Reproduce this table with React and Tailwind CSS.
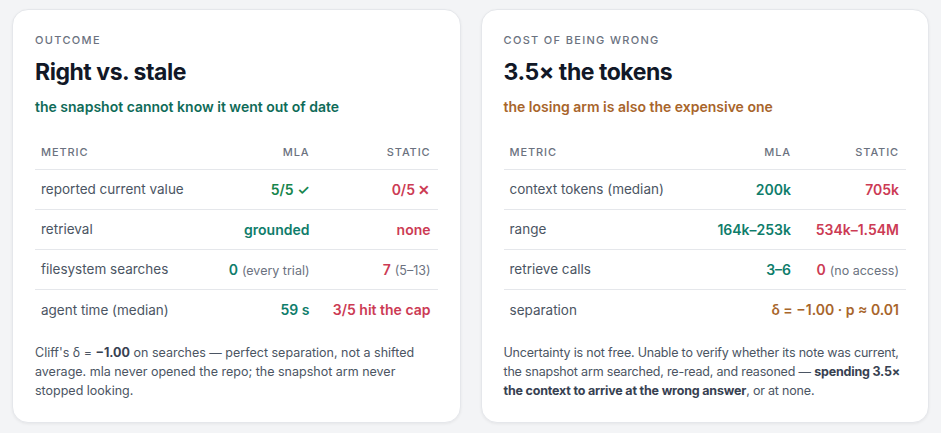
const teal = "text-[#0f7d6b]";
const green = "text-[#17854c]";
const red = "text-[#cc3b54]";
const amber = "text-[#a8652b]";

function Note({ children }) {
  return <span className="ml-1 text-[12.5px] font-normal text-[#6b7280]">{children}</span>;
}

function Card({ label, title, subtitle, subColor, cols, rows, footer, footerTrack }) {
  return (
    <div className="flex-1 rounded-2xl border border-[#e5e7eb] bg-white p-[22px] shadow-[0_1px_3px_rgba(0,0,0,0.06)]">
      <div className="text-[11px] leading-4 font-medium tracking-[0.12em] text-[#6b7280] uppercase">{label}</div>
      <h2 className="mt-2 text-[23px] leading-8 font-bold tracking-[-0.02em] text-[#111827]">{title}</h2>
      <p className={`mt-[9px] text-[14px] leading-5 font-semibold ${subColor}`}>{subtitle}</p>

      <table className="mt-5 w-full table-fixed border-collapse">
        <colgroup>
          <col />
          <col style={{ width: cols[0] }} />
          <col style={{ width: cols[1] }} />
        </colgroup>
        <thead>
          <tr className="border-b border-[#e5e7eb] text-[11px] leading-4 font-medium tracking-[0.08em] text-[#6b7280]">
            <th className="pt-[7px] pr-[7px] pb-[9px] pl-[6px] text-left font-medium">METRIC</th>
            <th className="pt-[7px] pr-[7px] pb-[9px] pl-[6px] text-right font-medium">MLA</th>
            <th className="pt-[7px] pr-[7px] pb-[9px] pl-[6px] text-right font-medium">STATIC</th>
          </tr>
        </thead>
        <tbody>
          {rows.map((r, i) => (
            <tr key={i} className={i < rows.length - 1 ? "border-b border-[#e5e7eb]" : ""}>
              <td className="h-10 pr-[7px] pl-[6px] text-[13.5px] whitespace-nowrap text-[#4b5563]">{r.metric}</td>
              {r.span ? (
                <td colSpan={2} className={`pr-[7px] pl-[6px] text-right text-[14px] font-semibold whitespace-nowrap ${r.span.c}`}>{r.span.v}</td>
              ) : (
                <>
                  <td className={`pr-[7px] pl-[6px] text-right text-[14px] font-semibold whitespace-nowrap ${r.a.c}`}>{r.a.v}</td>
                  <td className={`pr-[7px] pl-[6px] text-right text-[14px] font-semibold whitespace-nowrap ${r.b.c}`}>{r.b.v}</td>
                </>
              )}
            </tr>
          ))}
        </tbody>
      </table>

      <p className={`mt-[13px] text-[12.5px] leading-[19.3px] text-[#4b5563] ${footerTrack}`}>{footer}</p>
    </div>
  );
}

export default function App() {
  return (
    <div className="min-h-[433px] bg-[#f3f4f6] px-3 pt-[9px] font-['Inter','Noto_Sans',sans-serif]">
      <div className="flex gap-5">
        <Card
          label="Outcome"
          title="Right vs. stale"
          subtitle="the snapshot cannot know it went out of date"
          subColor="text-[#0f6b58]"
          cols={["120px", "121px"]}
          footerTrack="tracking-[0em]"
          rows={[
            { metric: "reported current value", a: { v: "5/5 ✓", c: green }, b: { v: "0/5 ✕", c: red } },
            { metric: "retrieval", a: { v: "grounded", c: teal }, b: { v: "none", c: red } },
            {
              metric: "filesystem searches",
              a: { v: <>0<Note>(every trial)</Note></>, c: teal },
              b: { v: <>7<Note>(5–13)</Note></>, c: red },
            },
            { metric: "agent time (median)", a: { v: "59 s", c: teal }, b: { v: "3/5 hit the cap", c: red } },
          ]}
          footer={
            <>
              Cliff's δ = <b className="font-bold text-[#374151]">−1.00</b> on searches — perfect separation, not a shifted average. mla never
              opened the repo; the snapshot arm never stopped looking.
            </>
          }
        />
        <Card
          label="Cost of being wrong"
          title="3.5× the tokens"
          subtitle="the losing arm is also the expensive one"
          subColor="text-[#a8652b]"
          cols={["120px", "108px"]}
          footerTrack="tracking-[-0.015em]"
          rows={[
            { metric: "context tokens (median)", a: { v: "200k", c: teal }, b: { v: "705k", c: red } },
            { metric: "range", a: { v: "164k–253k", c: teal }, b: { v: "534k–1.54M", c: red } },
            { metric: "retrieve calls", a: { v: "3–6", c: teal }, b: { v: <>0<Note>(no access)</Note></>, c: red } },
            { metric: "separation", span: { v: "δ = −1.00 · p ≈ 0.01", c: amber } },
          ]}
          footer={
            <>
              Uncertainty is not free. Unable to verify whether its note was current, the snapshot arm searched, re-read, and
              reasoned — <b className="font-bold text-[#374151]">spending 3.5× the context to arrive at the wrong answer</b>, or at
              none.
            </>
          }
        />
      </div>
    </div>
  );
}
